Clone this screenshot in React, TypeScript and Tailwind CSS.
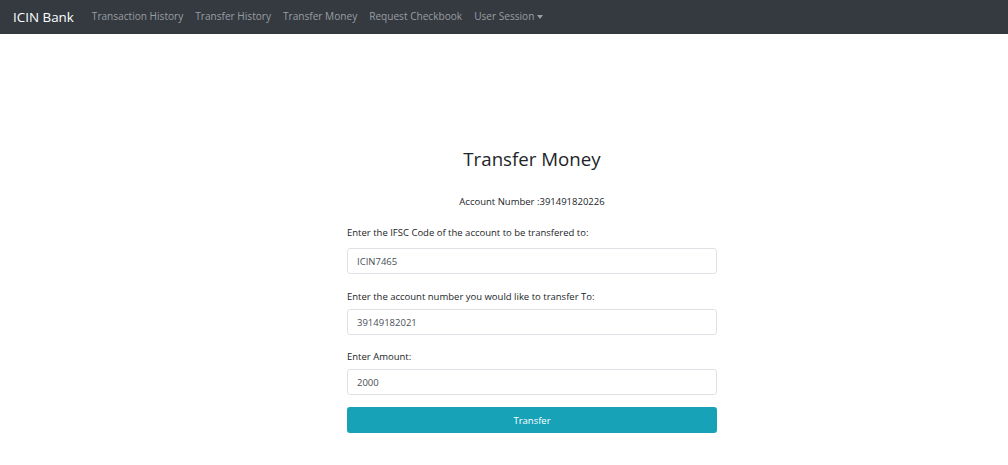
export default function App() {
  const links = ["Transaction History", "Transfer History", "Transfer Money", "Request Checkbook"];
  return (
    <div className="min-h-[465px] bg-white font-['Open_Sans',sans-serif] text-[#212529]">
      <nav className="flex h-[34px] items-center bg-[#343a40] pl-[13px] pr-[10px]">
        <span className="mr-[18px] text-[13.4px] text-white">ICIN Bank</span>
        <div className="flex items-center gap-[12px] text-[10.1px] text-[#9a9da0]">
          {links.map((l) => (
            <a key={l} href="#">
              {l}
            </a>
          ))}
          <a href="#" className="flex items-center gap-[3px]">
            User Session
            <span className="inline-block h-0 w-0 border-x-[3.5px] border-t-[4px] border-x-transparent border-t-[#9a9da0]" />
          </a>
        </div>
      </nav>
      <div className="flex justify-center pl-[56px] pt-[112px]">
        <div className="w-[370px] text-[9.5px] leading-[15px]">
          <h2 className="text-center text-[18.7px] leading-[26px]">Transfer Money</h2>
          <p className="mt-[22px] text-center">Account Number :391491820226</p>
          <label className="mt-[16px] block">Enter the IFSC Code of the account to be transfered to:</label>
          <div className="mt-[8px] flex h-[26px] items-center rounded-[3px] border border-[#dee2e6] px-[9px] text-[#495057]">ICIN7465</div>
          <label className="mt-[15px] block">Enter the account number you would like to transfer To:</label>
          <div className="mt-[5px] flex h-[26px] items-center rounded-[3px] border border-[#dee2e6] px-[9px] text-[#495057]">39149182021</div>
          <label className="mt-[14px] block">Enter Amount:</label>
          <div className="mt-[5px] flex h-[26px] items-center rounded-[3px] border border-[#dee2e6] px-[9px] text-[#495057]">2000</div>
          <button className="mt-[12px] flex h-[26px] w-full items-center justify-center rounded-[3px] bg-[#17a2b8] text-white">Transfer</button>
        </div>
      </div>
    </div>
  );
}
